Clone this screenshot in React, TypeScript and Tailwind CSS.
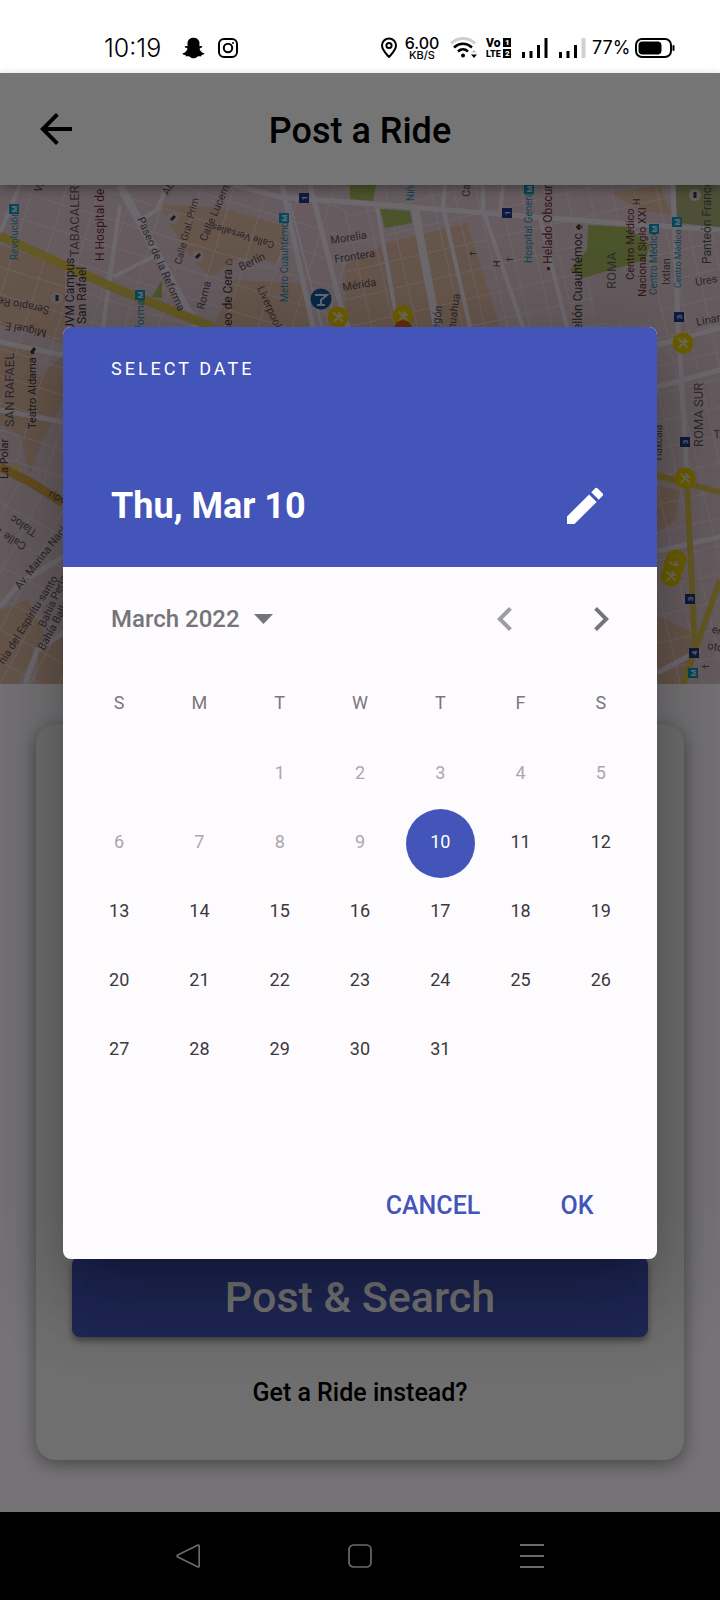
import type { ReactNode } from "react";
import { MdArrowBack, MdChevronLeft, MdChevronRight, MdEdit } from "react-icons/md";
import { FaSnapchatGhost } from "react-icons/fa";

function StatusBar() {
  return (
    <header className="flex h-[73px] items-center bg-white pt-[23px] pr-[45px] pl-[104px] font-['Inter',sans-serif] text-black">
      <time className="w-[78px] text-[25px] leading-6 font-light">10:19</time>
      <FaSnapchatGhost className="h-[22px] w-[23px]" aria-hidden="true" />
      <svg className="ml-3 h-[22px] w-[22px]" viewBox="0 0 22 22" fill="none" stroke="currentColor" strokeWidth="2" aria-hidden="true">
        <rect x="2" y="2" width="18" height="18" rx="5" />
        <circle cx="11" cy="11" r="4.2" />
        <circle cx="16" cy="6" r="1" fill="currentColor" stroke="none" />
      </svg>
      <div className="ml-auto flex items-center">
        <svg className="h-[22px] w-[18px]" viewBox="0 0 18 22" fill="none" stroke="currentColor" strokeWidth="2" aria-hidden="true">
          <path d="M9 20C6 16.500 2 13 2 8.500a7 7 0 0 1 14 0C16 13 12 16.500 9 20Z" strokeLinejoin="round" />
          <circle cx="9" cy="8.500" r="2.600" />
        </svg>
        <div className="ml-1 flex w-10 flex-col items-center font-medium">
          <span className="text-base leading-[14px]">6.00</span>
          <span className="text-[11px] leading-[11px]">KB/S</span>
        </div>
        <svg className="ml-2 h-[22px] w-[28px]" viewBox="0 0 28 22" fill="none" aria-hidden="true">
          <path d="M1 6.500C8 -.2 18 -.2 25 6.500" stroke="#cfcfcf" strokeWidth="3" />
          <path d="M4 10.500c5.500-5 12.500-5 18 0M8 14.500c3-2.800 7-2.800 10 0" stroke="currentColor" strokeWidth="2.600" />
          <circle cx="13" cy="18.500" r="2" fill="currentColor" />
          <path d="M21.500 15.500 24 13l2.500 2.500z" fill="#bbb" />
          <path d="M21 17.500h6L24 21z" fill="currentColor" />
        </svg>
        <svg className="ml-2 h-[22px] w-[26px]" viewBox="0 0 26 22" fontFamily="Roboto, sans-serif" fontWeight="900" aria-label="VoLTE">
          <text x="0" y="10" fontSize="12">Vo</text>
          <text x="0" y="20" fontSize="9">LTE</text>
          <rect x="17" y="1" width="8" height="9" />
          <rect x="17" y="12" width="8" height="9" />
          <text x="19" y="8" fontSize="8" fill="#fff">1</text>
          <text x="19" y="19" fontSize="8" fill="#fff">2</text>
        </svg>
        <svg className="ml-[10px] h-[20px] w-[26px]" viewBox="0 0 26 20" aria-hidden="true">
          <path d="M0 14h3v6H0zM7.500 13h3v7h-3zM15 7h3v13h-3zM22.500 0h3v20h-3z" />
        </svg>
        <svg className="ml-[11px] h-[20px] w-[27px]" viewBox="0 0 27 20" aria-hidden="true">
          <path d="M0 14h3v6H0zM7.500 13h3v7h-3zM15 7h3v13h-3z" />
          <path d="M22.500 0h4v20h-4z" fill="#d0d0d0" />
        </svg>
        <span className="ml-1.5 w-[39px] text-lg leading-5">77%</span>
        <svg className="ml-1 h-[20px] w-[40px]" viewBox="0 0 40 20" aria-hidden="true">
          <rect x="1" y="1" width="35" height="18" rx="6" fill="none" stroke="#000" strokeWidth="2" />
          <rect x="3.500" y="3.500" width="23" height="13" rx="4" />
          <rect x="37.500" y="7" width="2" height="6" rx="1" />
        </svg>
      </div>
    </header>
  );
}

type LabelProps = { x: number; y: number; r?: number; size?: number; fill?: string; children: ReactNode };

function Label({ x, y, r = -90, size = 11, fill = "#5c5258", children }: LabelProps) {
  return (
    <text x={x} y={y} fontSize={size} fill={fill} transform={`rotate(${r} ${x} ${y})`}>
      {children}
    </text>
  );
}

function Metro({ x, y, fill = "#1398c4", children = "M" }: { x: number; y: number; fill?: string; children?: ReactNode }) {
  return (
    <g transform={`translate(${x} ${y}) rotate(-90)`}>
      <rect x="-5" y="-5" width="10" height="10" fill={fill} />
      <text x="0" y="3" fontSize="8" fontWeight="700" fill="#fff" fillOpacity="0.8" textAnchor="middle">
        {children}
      </text>
    </g>
  );
}

function Food({ x, y }: { x: number; y: number }) {
  return (
    <g transform={`translate(${x} ${y})`}>
      <circle r="10.500" fill="#e8cb00" />
      <path d="M-4 4.500 1.500-1M-4-4 4 4M1-4 4-1M1-4 1.500-1 4-1" stroke="#efe6c0" strokeWidth="1.800" strokeLinecap="round" fill="none" />
    </g>
  );
}

const teal = "#2790b5";
const maroon = "#6b2f3a";
const dark = "#3f373d";
const district = "#66596a";

function CityMap() {
  return (
    <svg
      className="h-[499px] w-full"
      viewBox="0 0 720 499"
      preserveAspectRatio="xMidYMin slice"
      fontFamily="Roboto, sans-serif"
      role="img"
      aria-label="City map"
    >
      <defs>
        <pattern id="gridLeft" width="32" height="26" patternUnits="userSpaceOnUse" patternTransform="rotate(17)">
          <path d="M0 0H32M0 0V26" stroke="#f4e6ee" strokeWidth="2" />
        </pattern>
        <pattern id="gridRight" width="22" height="27" patternUnits="userSpaceOnUse" patternTransform="rotate(-13)">
          <path d="M0 0H22M0 0V27" stroke="#f4e6ee" strokeWidth="2" />
        </pattern>
        <pattern id="gridLow" width="26" height="28" patternUnits="userSpaceOnUse" patternTransform="rotate(28)">
          <path d="M0 0H26M0 0V28" stroke="#f4e6ee" strokeWidth="2" />
        </pattern>
      </defs>
      <rect width="720" height="499" fill="#dfc9d0" />
      <g fill="#dfbaa3">
        <path d="M160 20 220 22 287 42 277 78 240 72 210 92 193 75 170 40ZM235 95 300 98 312 142H213ZM0 60 65 82V160L40 150 0 140ZM387 58 467 38 500 142H345V80ZM0 158H30L36 195 63 170V215L40 262 30 290 20 250 0 240ZM0 425 28 415 45 450 18 499H0ZM40 460 63 450V499H35ZM655 300 680 305 675 335 655 350ZM655 430 700 450 682 499H655ZM610 8 660 0 672 30 640 25Z" />
      </g>
      <g opacity="0.6">
        <rect width="345" height="300" fill="url(#gridLeft)" />
        <rect y="300" width="345" height="199" fill="url(#gridLow)" />
        <rect x="345" width="375" height="499" fill="url(#gridRight)" />
      </g>
      <g fill="#a3b75c">
        <path d="M350 0H376L373 16 350 14ZM380 24 410 26 412 38 385 43ZM588 40 627 42 650 60 645 75 583 93 570 85 587 65Z" />
        <path d="M152 112 162 95V113Z" />
        <path d="M675 0H720V42L677 38Z" fill="#a9ad78" />
      </g>
      <path d="M590 94 650 80 662 138H596Z" fill="#dcc6cd" />
      <g fill="none" stroke="#eee3ee" strokeWidth="5">
        <path d="M120 0 187 125 200 142" strokeWidth="8" />
        <path d="M120 20 103 142M113 92 160 68M167 0 157 25 143 33M20 0 0 48" strokeWidth="4" />
        <path d="M233 0 280 12 360 18 547 33 720 45M282 0 313 142M310 0 340 118 348 142" />
        <path d="M290 18 322 142" strokeWidth="2" />
        <path d="M377 22 398 142M445 0 443 22 470 142M483 0 483 25 523 142M503 0 500 28M540 33 567 142" strokeWidth="4" />
        <path d="M415 25 437 142" strokeWidth="8" />
        <path d="M673 0 678 138 687 290M657 202 720 185M657 160 720 143M657 366 720 352M657 488 700 465" />
        <path d="M0 157 63 170M0 225 63 237M0 422 20 398 63 372" />
        <path d="M25 499 37 465 63 448" />
      </g>
      <g fill="none" stroke="#d9bf50" strokeWidth="9">
        <path d="M0 51 110 101 213 142" />
        <path d="M655 290 720 307M687 295 695 468M720 395 683 499" strokeWidth="6" />
        <path d="M0 282 30 297 63 318" stroke="#d9a845" />
      </g>

      <Label x={18} y={75} size={10} fill={teal}>Revolución</Label>
      <Label x={41} y={8} r={-70}>Va</Label>
      <Label x={79} y={72} size={13} fill={district}>TABACALERA</Label>
      <Label x={104} y={76} size={12} fill={maroon}>H Hospital de la</Label>
      <Label x={74} y={146} size={12} fill={dark}>UVM Campus</Label>
      <Label x={86} y={139} size={12} fill={dark}>San Rafael</Label>
      <Label x={50} y={122} r={191}>Serapio Rendón</Label>
      <Label x={47} y={145} r={191}>Miguel E. S.</Label>
      <Label x={137} y={34} r={66}>Paseo de la Reforma</Label>
      <Label x={168} y={11} r={-60}>Ab</Label>
      <Label x={181} y={80} r={-75} size={10}>Calle Gral. Prim</Label>
      <Label x={206} y={57} r={-67}>Calle Lucerna</Label>
      <Label x={275} y={57} r={197} size={10}>Calle Versalles</Label>
      <Label x={204} y={125} r={-76}>Roma</Label>
      <Label x={232} y={147} size={12} fill={dark}>seo de Cera ⌂</Label>
      <Label x={241} y={86} r={-26}>Berlín</Label>
      <Label x={257} y={103} r={66}>Liverpool</Label>
      <Label x={288} y={117} size={10} fill={teal}>Metro Cuauhtémoc</Label>
      <Label x={144} y={144} fill={teal}>forma</Label>
      <Label x={331} y={59} r={-9}>Morelia</Label>
      <Label x={335} y={78} r={-9}>Frontera</Label>
      <Label x={343} y={106} r={-9}>Mérida</Label>
      <Label x={414} y={16} size={10} fill={teal}>Niños</Label>
      <Label x={470} y={12}>Ca</Label>
      <Label x={455} y={145} r={-82}>huahua</Label>
      <Label x={439} y={145} r={-82}>egón</Label>
      <Label x={532} y={78} size={10} fill={teal}>Hospital General</Label>
      <Label x={552} y={86} size={12} fill={maroon}>▪ Helado Obscuro</Label>
      <Label x={582} y={145} size={12} fill={dark}>ellón Cuauhtémoc ♠</Label>
      <Label x={616} y={104} fill="#6d6460" size={13}>ROMA</Label>
      <Label x={634} y={95} fill={maroon}>Centro Médico</Label>
      <Label x={646} y={112} fill={maroon}>Nacional Siglo XXI</Label>
      <Label x={640} y={20} fill={maroon} size={9}>H</Label>
      <Label x={657} y={110} size={10} fill={teal}>Centro Médico</Label>
      <Label x={670} y={100}>Ixtlan</Label>
      <Label x={681} y={103} size={9} fill={teal}>Centro Médico</Label>
      <Label x={711} y={79} size={12} fill="#4c5c43">Panteón Francés</Label>
      <Label x={696} y={101} r={-10}>Ures</Label>
      <Label x={697} y={141} r={-12}>Linares</Label>
      <Label x={500} y={82} fill={maroon} size={9}>H</Label>
      <Label x={513} y={77} size={9}>†</Label>
      <Label x={476} y={71} size={9}>†</Label>
      <Label x={14} y={242} fill={district} size={13}>SAN RAFAEL</Label>
      <Label x={36} y={244} fill={dark}>Teatro Aldama ▪</Label>
      <Label x={8} y={294} fill={dark}>La Polar</Label>
      <Label x={48} y={311} r={25}>ripo</Label>
      <Label x={38} y={346} r={213}>Tlaloc</Label>
      <Label x={27} y={359} r={210}>Calle Tor</Label>
      <Label x={20} y={405} r={-52}>Av. Marina Nacional</Label>
      <Label x={4} y={480} r={-58}>hía del Espíritu santo</Label>
      <Label x={45} y={443} r={-66}>Bahía Perla</Label>
      <Label x={44} y={466} r={-62}>Bahía Ballena</Label>
      <Label x={703} y={262} fill={district} size={13}>ROMA SUR</Label>
      <Label x={662} y={277} size={10}>Tlaxcala</Label>
      <Label x={714} y={253} r={-5}>T</Label>
      <Label x={707} y={464} r={10}>oto</Label>
      <Label x={711} y={447} r={20}>era</Label>
      <Label x={709} y={484} size={9}>†</Label>

      <Metro x={14} y={24} />
      <Metro x={140} y={110} />
      <Metro x={284} y={33} />
      <Metro x={304} y={13} fill="#223a8c">1</Metro>
      <Metro x={507} y={28} fill="#223a8c">1</Metro>
      <Metro x={529} y={4} />
      <Metro x={654} y={44} />
      <Metro x={677} y={37} />
      <Metro x={679} y={132} fill="#223a8c">3</Metro>
      <Metro x={685} y={257} fill="#223a8c">3</Metro>
      <Metro x={690} y={414} fill="#223a8c">3</Metro>
      <Metro x={694} y={468} fill="#223a8c">4</Metro>
      <Metro x={693} y={488} />
      <g fill="#dccdd4">
        <circle cx="173" cy="33" r="6" />
        <circle cx="198" cy="71" r="6" />
        <circle cx="57" cy="113" r="6" />
        <circle cx="695" cy="10" r="6" />
      </g>
      <path d="m171 35 4-4m21 42 4-4M57 110v6M695 7v6M31 168l4-5" stroke={dark} strokeWidth="3" />
      <circle cx="16" cy="281" r="4" fill="#e0cf80" />
      <circle cx="321" cy="114" r="10.500" fill="#155a9e" />
      <path d="M315 110h12l-6 5v5m-4 0h8" fill="none" stroke="#dfe6f0" strokeWidth="2" />
      <Food x={338} y={132} />
      <Food x={403} y={131} />
      <circle cx="403" cy="144" r="9" fill="#d86020" />
      <Food x={683} y={158} />
      <Food x={685} y={293} />
      <Food x={676} y={375} />
      <Food x={674} y={381} />
      <Food x={671} y={391} />
    </svg>
  );
}

const weekdays = ["S", "M", "T", "W", "T", "F", "S"];
const firstWeekday = 2;
const daysInMonth = 31;
const today = 10;
const weeks = Array.from({ length: 6 }, (_, w) =>
  Array.from({ length: 7 }, (_, d) => {
    const day = w * 7 + d - firstWeekday + 1;
    return day >= 1 && day <= daysInMonth ? day : null;
  }),
);

function dayStyle(day: number) {
  if (day === today) return "bg-[#4355b9] text-white";
  if (day < today) return "text-[#a9a8ab]";
  return "text-[#3a393c]";
}

function DatePicker() {
  return (
    <section
      role="dialog"
      aria-modal="true"
      aria-label="Select date"
      className="w-full overflow-hidden rounded-lg bg-[#fefbff] shadow-[0_22px_30px_-14px_rgba(0,0,0,0.2),0_48px_76px_6px_rgba(0,0,0,0.14),0_18px_92px_16px_rgba(0,0,0,0.12)]"
    >
      <div className="flex h-[240px] flex-col justify-between bg-[#4355b9] px-12 pt-8 pb-[37px] text-white">
        <p className="text-lg leading-5 tracking-[3px]">SELECT DATE</p>
        <div className="flex items-center justify-between">
          <h2 className="text-4xl font-bold">Thu, Mar 10</h2>
          <button type="button" aria-label="Edit date">
            <MdEdit className="size-12" />
          </button>
        </div>
      </div>
      <div className="flex h-[104px] items-center pr-2 pl-12 text-[#757478]">
        <button type="button" className="flex items-center gap-3.5 text-2xl font-medium">
          March 2022
          <svg className="h-[10px] w-[19px]" viewBox="0 0 19 10" fill="currentColor" aria-hidden="true">
            <path d="M0 0H19L9.500 10Z" />
          </svg>
        </button>
        <button type="button" aria-label="Previous month" className="ml-auto flex w-24 justify-center text-[#9d9c9f]">
          <MdChevronLeft className="size-12" />
        </button>
        <button type="button" aria-label="Next month" className="flex w-24 justify-center">
          <MdChevronRight className="size-12" />
        </button>
      </div>
      <div className="px-4">
        <table className="w-full table-fixed border-collapse text-center text-lg">
          <thead>
            <tr>
              {weekdays.map((name, i) => (
                <th key={i} scope="col" className="h-[69px] p-0 pb-1 font-normal text-[#78777a]">
                  {name}
                </th>
              ))}
            </tr>
          </thead>
          <tbody>
            {weeks.map((week, w) => (
              <tr key={w}>
                {week.map((day, d) => (
                  <td key={d} className="h-[69px] p-0">
                    {day && (
                      <button type="button" disabled={day < today} className={`mx-auto block size-[69px] rounded-full pb-0.5 ${dayStyle(day)}`}>
                        {day}
                      </button>
                    )}
                  </td>
                ))}
              </tr>
            ))}
          </tbody>
        </table>
      </div>
      <div className="flex h-[105px] items-center justify-end gap-4 px-4 text-[25px] font-medium text-[#4355b9]">
        <button type="button" className="h-[72px] min-w-32">CANCEL</button>
        <button type="button" className="h-[72px] min-w-32">OK</button>
      </div>
    </section>
  );
}

function RideScreen() {
  return (
    <>
      <div className="relative grid h-28 grid-cols-[1fr_auto_1fr] items-center bg-white px-8 shadow-[0_4px_10px_rgba(0,0,0,0.35)]">
        <button type="button" aria-label="Back" className="w-12">
          <MdArrowBack className="size-12" />
        </button>
        <h1 className="pt-1 text-4xl font-medium">Post a Ride</h1>
      </div>
      <CityMap />
      <div className="flex grow flex-col px-9 pt-10 pb-13">
        <div className="flex grow flex-col justify-end rounded-[20px] bg-[#f1f1f1] px-9 pb-[51px] shadow-[0_4px_18px_rgba(0,0,0,0.4)]">
          <button
            type="button"
            className="h-20 rounded-lg bg-[#4355b9] text-[43px] leading-none font-medium text-white shadow-[0_4px_6px_rgba(0,0,0,0.4)]"
          >
            Post &amp; Search
          </button>
          <a href="#get" className="mt-10 self-center text-[25px] leading-8 font-medium">
            Get a Ride instead?
          </a>
        </div>
      </div>
    </>
  );
}

function NavBar() {
  return (
    <nav className="flex h-[88px] items-center justify-center gap-[148px] bg-black text-[#6b6b6b]" aria-label="System">
      <button type="button" aria-label="Back">
        <svg className="size-6" viewBox="0 0 24 24" fill="none" stroke="currentColor" strokeWidth="1.700" strokeLinejoin="round">
          <path d="M21.500 1.200Q23.200.6 23.200 2.200V21.800Q23.200 23.400 21.500 22.800L1.800 13Q.4 12 1.800 11Z" />
        </svg>
      </button>
      <button type="button" aria-label="Home">
        <svg className="size-6" viewBox="0 0 24 24" fill="none" stroke="currentColor" strokeWidth="1.700">
          <rect x="1" y="1" width="22" height="22" rx="4.500" />
        </svg>
      </button>
      <button type="button" aria-label="Recent apps">
        <svg className="size-6" viewBox="0 0 24 24" stroke="currentColor" strokeWidth="2">
          <path d="M0 1H24M0 12H24M0 23H24" />
        </svg>
      </button>
    </nav>
  );
}

export default function App() {
  return (
    <div className="flex min-h-screen flex-col font-['Roboto',sans-serif] text-black">
      <StatusBar />
      <main className="relative flex grow flex-col bg-[#fefaff]">
        <RideScreen />
        <div className="absolute inset-0 flex items-center bg-black/54 px-[63px]">
          <DatePicker />
        </div>
      </main>
      <NavBar />
    </div>
  );
}
